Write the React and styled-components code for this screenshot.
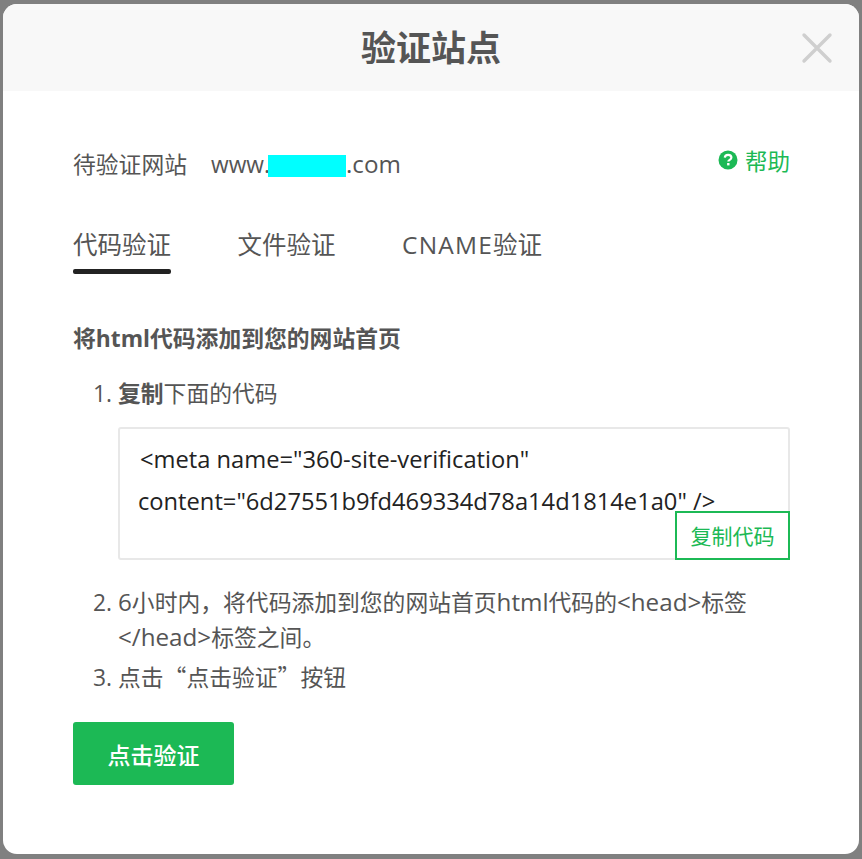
import React from "react"
import styled, { createGlobalStyle } from "styled-components"

const GlobalStyle = createGlobalStyle`
  html, body {
    margin: 0;
    height: 100%;
    background: #808080;
  }
  * {
    box-sizing: border-box;
  }
`

const green = "#1cb955"
const textColor = "#555"

const Overlay = styled.div`
  width: 862px;
  height: 859px;
  padding: 4px 3px 5px;
  background: #808080;
  font-family: "Open Sans", "Noto Sans CJK SC", sans-serif;
  color: ${textColor};
`

const Modal = styled.div`
  height: 100%;
  background: #fff;
  border-radius: 14px;
  overflow: hidden;
`

const Header = styled.div`
  position: relative;
  height: 87px;
  background: #f8f8f8;
  display: flex;
  align-items: center;
  justify-content: center;
`

const Title = styled.h2`
  margin: 0 0 1px;
  font-size: 35px;
  line-height: 87px;
  font-weight: 700;
`

const CloseButton = styled.button`
  position: absolute;
  top: 28px;
  right: 26px;
  width: 32px;
  height: 32px;
  padding: 0;
  border: 0;
  background: none;
  display: flex;
`

const Body = styled.div`
  padding: 48px 69px 0 70px;
`

const SiteRow = styled.div`
  display: flex;
  justify-content: space-between;
  height: 44px;
`

const SiteInfo = styled.div`
  display: flex;
  font-size: 22.8px;
  line-height: 44px;
  margin-top: 4px;
`

const SiteLabel = styled.span`
  width: 138px;
`

const Mask = styled.span`
  display: inline-block;
  width: 78px;
  height: 22px;
  margin-left: -2px;
  background: #00ffff;
  vertical-align: -4px;
`

const HelpLink = styled.a`
  display: flex;
  align-items: center;
  gap: 7px;
  height: 34px;
  margin-top: 4px;
  font-size: 22.5px;
  color: ${green};
`

const Tabs = styled.div`
  display: flex;
  gap: 66.5px;
  margin-top: 40px;
`

const Tab = styled.div`
  height: 57px;
  font-size: 24.5px;
  line-height: 44px;
  position: relative;
  ${p =>
    p.$active &&
    `&::after {
      content: "";
      position: absolute;
      left: 0;
      right: 0;
      top: 46px;
      height: 5px;
      border-radius: 2px;
      background: #222;
    }`}
`

const Latin = styled.span`
  letter-spacing: 1.2px;
`

const Word = styled.span`
  font-size: 24.2px;
  line-height: 1;
`

const Heading = styled.h3`
  margin: 0;
  padding-top: 39px;
  font-size: 22.8px;
  line-height: 40px;
  font-weight: 700;
`

const Steps = styled.ol`
  margin: 17px 0 0;
  padding: 0 0 0 45px;
  font-size: 22.8px;
  line-height: 35px;
`

const Step = styled.li`
  margin-bottom: 5px;
`

const Quote = styled.span`
  font-family: "Noto Sans CJK SC", sans-serif;
  line-height: 1;
`

const CodeBox = styled.div`
  position: relative;
  height: 133px;
  margin: 16px 0 25px;
  padding: 9px 18px 0;
  border: 2px solid #e8e8e8;
  border-radius: 3px;
  font-size: 23.7px;
  line-height: 42px;
  color: #222;
`

const CodeLine = styled.div`
  white-space: nowrap;
  padding-left: ${p => p.$indent || 0}px;
`

const CopyButton = styled.button`
  position: absolute;
  right: -2px;
  bottom: -2px;
  width: 115px;
  height: 49px;
  padding: 0;
  border: 2px solid ${green};
  background: #fff;
  color: ${green};
  font: inherit;
  font-size: 21px;
`

const SubmitButton = styled.button`
  display: block;
  width: 161px;
  height: 63px;
  margin-top: 27px;
  border: 0;
  border-radius: 3px;
  background: ${green};
  color: #fff;
  font: inherit;
  font-size: 23px;
  font-weight: 500;
`

const App = () => (
  <>
    <GlobalStyle />
    <Overlay>
      <Modal>
        <Header>
          <Title>验证站点</Title>
          <CloseButton aria-label="关闭">
            <svg width="32" height="32" viewBox="0 0 32 32">
              <path
                d="M3 3 L29 29 M29 3 L3 29"
                stroke="#cfcfcf"
                strokeWidth="3.4"
                strokeLinecap="round"
                fill="none"
              />
            </svg>
          </CloseButton>
        </Header>
        <Body>
          <SiteRow>
            <SiteInfo>
              <SiteLabel>待验证网站</SiteLabel>
              <span>
                www.
                <Mask />
                <Word>.com</Word>
              </span>
            </SiteInfo>
            <HelpLink>
              <svg width="20" height="20" viewBox="0 0 20 20">
                <circle cx="10" cy="10" r="9.5" fill={green} />
                <path
                  d="M6.8 7.6 C6.9 5.7 8.3 4.8 10.1 4.8 C12 4.8 13.4 5.9 13.4 7.5 C13.4 9.9 10.3 9.7 10.3 11.6"
                  stroke="#fff"
                  strokeWidth="2.2"
                  fill="none"
                />
                <rect x="9.1" y="13" width="2.4" height="2.4" fill="#fff" />
              </svg>
              帮助
            </HelpLink>
          </SiteRow>
          <Tabs>
            <Tab $active>代码验证</Tab>
            <Tab>文件验证</Tab>
            <Tab>
              <Latin>CNAME</Latin>验证
            </Tab>
          </Tabs>
          <Heading>将html代码添加到您的网站首页</Heading>
          <Steps>
            <Step>
              <b>复制</b>下面的代码
              <CodeBox>
                <CodeLine $indent={2}>{'<meta name="360-site-verification"'}</CodeLine>
                <CodeLine>{'content="6d27551b9fd469334d78a14d1814e1a0" />'}</CodeLine>
                <CopyButton>复制代码</CopyButton>
              </CodeBox>
            </Step>
            <Step>
              <Word>6</Word>小时内，将代码添加到您的网站首页<Word>html</Word>代码的
              <Word>&lt;head&gt;</Word>标签<Word>&lt;/head&gt;</Word>标签之间。
            </Step>
            <Step>
              点击<Quote>“</Quote>点击验证<Quote>”</Quote>按钮
            </Step>
          </Steps>
          <SubmitButton>点击验证</SubmitButton>
        </Body>
      </Modal>
    </Overlay>
  </>
)

export default App
